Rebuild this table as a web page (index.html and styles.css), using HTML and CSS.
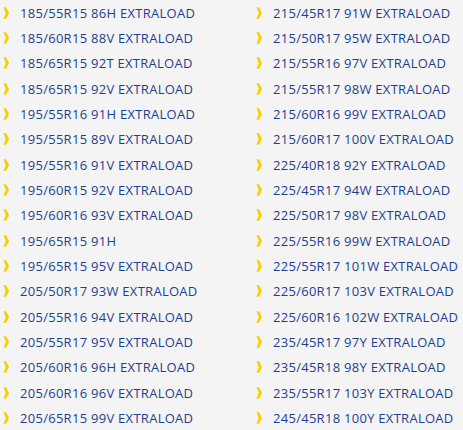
FILE: index.html
```html
<!DOCTYPE html>
<html>
<head>
<meta charset="utf-8">
<link rel="stylesheet" href="styles.css">
</head>
<body>
<ul class="sizes">
<li><svg class="chev" viewBox="0 0 6 12"><polygon points="0.4,0 3.3,0.6 6,6 3.3,11.4 0.4,12 2.7,6"/></svg><span>185/55R15 86H EXTRALOAD</span></li>
<li><svg class="chev" viewBox="0 0 6 12"><polygon points="0.4,0 3.3,0.6 6,6 3.3,11.4 0.4,12 2.7,6"/></svg><span>215/45R17 91W EXTRALOAD</span></li>
<li><svg class="chev" viewBox="0 0 6 12"><polygon points="0.4,0 3.3,0.6 6,6 3.3,11.4 0.4,12 2.7,6"/></svg><span>185/60R15 88V EXTRALOAD</span></li>
<li><svg class="chev" viewBox="0 0 6 12"><polygon points="0.4,0 3.3,0.6 6,6 3.3,11.4 0.4,12 2.7,6"/></svg><span>215/50R17 95W EXTRALOAD</span></li>
<li><svg class="chev" viewBox="0 0 6 12"><polygon points="0.4,0 3.3,0.6 6,6 3.3,11.4 0.4,12 2.7,6"/></svg><span>185/65R15 92T EXTRALOAD</span></li>
<li><svg class="chev" viewBox="0 0 6 12"><polygon points="0.4,0 3.3,0.6 6,6 3.3,11.4 0.4,12 2.7,6"/></svg><span>215/55R16 97V EXTRALOAD</span></li>
<li><svg class="chev" viewBox="0 0 6 12"><polygon points="0.4,0 3.3,0.6 6,6 3.3,11.4 0.4,12 2.7,6"/></svg><span>185/65R15 92V EXTRALOAD</span></li>
<li><svg class="chev" viewBox="0 0 6 12"><polygon points="0.4,0 3.3,0.6 6,6 3.3,11.4 0.4,12 2.7,6"/></svg><span>215/55R17 98W EXTRALOAD</span></li>
<li><svg class="chev" viewBox="0 0 6 12"><polygon points="0.4,0 3.3,0.6 6,6 3.3,11.4 0.4,12 2.7,6"/></svg><span>195/55R16 91H EXTRALOAD</span></li>
<li><svg class="chev" viewBox="0 0 6 12"><polygon points="0.4,0 3.3,0.6 6,6 3.3,11.4 0.4,12 2.7,6"/></svg><span>215/60R16 99V EXTRALOAD</span></li>
<li><svg class="chev" viewBox="0 0 6 12"><polygon points="0.4,0 3.3,0.6 6,6 3.3,11.4 0.4,12 2.7,6"/></svg><span>195/55R15 89V EXTRALOAD</span></li>
<li><svg class="chev" viewBox="0 0 6 12"><polygon points="0.4,0 3.3,0.6 6,6 3.3,11.4 0.4,12 2.7,6"/></svg><span>215/60R17 100V EXTRALOAD</span></li>
<li><svg class="chev" viewBox="0 0 6 12"><polygon points="0.4,0 3.3,0.6 6,6 3.3,11.4 0.4,12 2.7,6"/></svg><span>195/55R16 91V EXTRALOAD</span></li>
<li><svg class="chev" viewBox="0 0 6 12"><polygon points="0.4,0 3.3,0.6 6,6 3.3,11.4 0.4,12 2.7,6"/></svg><span>225/40R18 92Y EXTRALOAD</span></li>
<li><svg class="chev" viewBox="0 0 6 12"><polygon points="0.4,0 3.3,0.6 6,6 3.3,11.4 0.4,12 2.7,6"/></svg><span>195/60R15 92V EXTRALOAD</span></li>
<li><svg class="chev" viewBox="0 0 6 12"><polygon points="0.4,0 3.3,0.6 6,6 3.3,11.4 0.4,12 2.7,6"/></svg><span>225/45R17 94W EXTRALOAD</span></li>
<li><svg class="chev" viewBox="0 0 6 12"><polygon points="0.4,0 3.3,0.6 6,6 3.3,11.4 0.4,12 2.7,6"/></svg><span>195/60R16 93V EXTRALOAD</span></li>
<li><svg class="chev" viewBox="0 0 6 12"><polygon points="0.4,0 3.3,0.6 6,6 3.3,11.4 0.4,12 2.7,6"/></svg><span>225/50R17 98V EXTRALOAD</span></li>
<li><svg class="chev" viewBox="0 0 6 12"><polygon points="0.4,0 3.3,0.6 6,6 3.3,11.4 0.4,12 2.7,6"/></svg><span>195/65R15 91H</span></li>
<li><svg class="chev" viewBox="0 0 6 12"><polygon points="0.4,0 3.3,0.6 6,6 3.3,11.4 0.4,12 2.7,6"/></svg><span>225/55R16 99W EXTRALOAD</span></li>
<li><svg class="chev" viewBox="0 0 6 12"><polygon points="0.4,0 3.3,0.6 6,6 3.3,11.4 0.4,12 2.7,6"/></svg><span>195/65R15 95V EXTRALOAD</span></li>
<li><svg class="chev" viewBox="0 0 6 12"><polygon points="0.4,0 3.3,0.6 6,6 3.3,11.4 0.4,12 2.7,6"/></svg><span>225/55R17 101W EXTRALOAD</span></li>
<li><svg class="chev" viewBox="0 0 6 12"><polygon points="0.4,0 3.3,0.6 6,6 3.3,11.4 0.4,12 2.7,6"/></svg><span>205/50R17 93W EXTRALOAD</span></li>
<li><svg class="chev" viewBox="0 0 6 12"><polygon points="0.4,0 3.3,0.6 6,6 3.3,11.4 0.4,12 2.7,6"/></svg><span>225/60R17 103V EXTRALOAD</span></li>
<li><svg class="chev" viewBox="0 0 6 12"><polygon points="0.4,0 3.3,0.6 6,6 3.3,11.4 0.4,12 2.7,6"/></svg><span>205/55R16 94V EXTRALOAD</span></li>
<li><svg class="chev" viewBox="0 0 6 12"><polygon points="0.4,0 3.3,0.6 6,6 3.3,11.4 0.4,12 2.7,6"/></svg><span>225/60R16 102W EXTRALOAD</span></li>
<li><svg class="chev" viewBox="0 0 6 12"><polygon points="0.4,0 3.3,0.6 6,6 3.3,11.4 0.4,12 2.7,6"/></svg><span>205/55R17 95V EXTRALOAD</span></li>
<li><svg class="chev" viewBox="0 0 6 12"><polygon points="0.4,0 3.3,0.6 6,6 3.3,11.4 0.4,12 2.7,6"/></svg><span>235/45R17 97Y EXTRALOAD</span></li>
<li><svg class="chev" viewBox="0 0 6 12"><polygon points="0.4,0 3.3,0.6 6,6 3.3,11.4 0.4,12 2.7,6"/></svg><span>205/60R16 96H EXTRALOAD</span></li>
<li><svg class="chev" viewBox="0 0 6 12"><polygon points="0.4,0 3.3,0.6 6,6 3.3,11.4 0.4,12 2.7,6"/></svg><span>235/45R18 98Y EXTRALOAD</span></li>
<li><svg class="chev" viewBox="0 0 6 12"><polygon points="0.4,0 3.3,0.6 6,6 3.3,11.4 0.4,12 2.7,6"/></svg><span>205/60R16 96V EXTRALOAD</span></li>
<li><svg class="chev" viewBox="0 0 6 12"><polygon points="0.4,0 3.3,0.6 6,6 3.3,11.4 0.4,12 2.7,6"/></svg><span>235/55R17 103Y EXTRALOAD</span></li>
<li><svg class="chev" viewBox="0 0 6 12"><polygon points="0.4,0 3.3,0.6 6,6 3.3,11.4 0.4,12 2.7,6"/></svg><span>205/65R15 99V EXTRALOAD</span></li>
<li><svg class="chev" viewBox="0 0 6 12"><polygon points="0.4,0 3.3,0.6 6,6 3.3,11.4 0.4,12 2.7,6"/></svg><span>245/45R18 100Y EXTRALOAD</span></li>
</ul>
</body>
</html>
```
FILE: styles.css
```css
html, body {
  margin: 0;
  background: #f4f4f4;
}
.sizes {
  list-style: none;
  margin: 0;
  padding: 0 0 0 3px;
  display: grid;
  grid-template-columns: 253px 1fr;
  grid-auto-rows: 25.33px;
  font-family: "Open Sans", sans-serif;
  font-size: 13px;
  letter-spacing: 0.28px;
  color: #1e3f90;
}
.sizes li {
  display: flex;
  align-items: center;
  gap: 11px;
  white-space: nowrap;
}
.chev {
  width: 6px;
  height: 12px;
  fill: #f6d000;
  flex: none;
}
```
